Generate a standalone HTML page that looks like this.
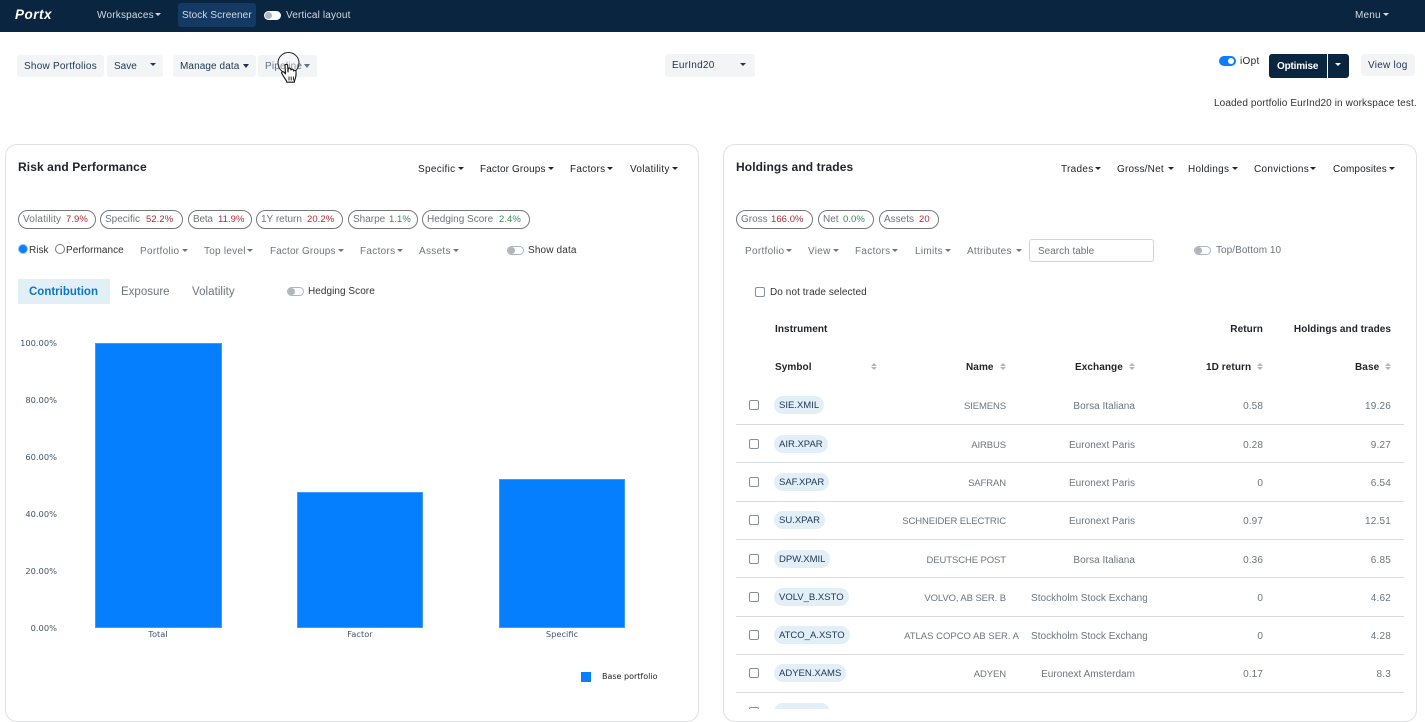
<!DOCTYPE html>
<html lang="en"><head><meta charset="utf-8"><title>Portx</title>
<style>
*{box-sizing:border-box}
html,body{margin:0;padding:0;width:1425px;height:722px;overflow:hidden;background:#fff}
body{position:relative;font-family:"Liberation Sans",sans-serif;font-size:10px;letter-spacing:.3px;color:#212529}
.t{position:absolute;white-space:nowrap;line-height:14px;margin-top:1px}
.a{position:absolute}
.nav{position:absolute;left:0;top:0;width:1425px;height:32px;background:#0a2540}
.w{color:#d5dae0}
.b{position:absolute;background:#f3f4f6;border-radius:3px}
.n{color:#1c3553}
.c{position:absolute;width:0;height:0;border-top:3px solid currentColor;border-left:3px solid transparent;border-right:3px solid transparent}
.card{position:absolute;top:144px;width:694px;height:578px;border:1px solid #dfe1e3;border-radius:12px;background:#fff}
.h{font-weight:700;font-size:12px;letter-spacing:.1px;color:#212529;margin-top:0}
.p{position:absolute;top:210px;height:19px;border:1px solid #777;border-radius:10px}
.g{color:#6c757d}
.pl{color:#6c757d;letter-spacing:0}
.red{color:#b02a37;font-size:9.5px;letter-spacing:.05px}
.grn{color:#2e8b57;font-size:9.5px;letter-spacing:.05px}
.tg{position:absolute;width:17px;height:9px;border:1px solid #adb5bd;border-radius:5px;background:#fff}
.tg i{position:absolute;left:0;top:0;width:7px;height:7px;border-radius:50%;background:#adb5bd}
.ax{font-family:"DejaVu Sans",sans-serif;font-size:8.3px;letter-spacing:0;color:#44546a}
.bar{position:absolute;background:#057ffe;border:1px solid #3e9bfb}
.th{font-weight:700;letter-spacing:.08px;color:#212529}
.s{position:absolute;width:6px;height:7px}
.s:before,.s:after{content:"";position:absolute;left:0;border-left:3px solid transparent;border-right:3px solid transparent}
.s:before{top:0;border-bottom:3px solid #adb5bd}
.s:after{bottom:0;border-top:3px solid #adb5bd}
.ck{position:absolute;width:10px;height:10px;border:1px solid #868e96;border-radius:2px;background:#fff}
.clip{position:absolute;left:0;top:0;width:1425px;height:709px;overflow:hidden}
.r{position:absolute;left:0;width:1425px;height:38.3px}
.r .l{position:absolute;left:736px;width:668px;top:38px;height:1px;background:#d8dadc}
.r .ck{left:749px;top:14.4px}
.r .y{position:absolute;left:774px;top:10.4px;height:18px;line-height:19.5px;padding:0 5px;border-radius:9px;background:#e3eff7;color:#1c3553;white-space:nowrap;letter-spacing:0;font-size:9.5px}
.r .t{top:13.4px;color:#6c757d}
.r .nm{right:419px;font-size:9.5px;letter-spacing:-.1px}
.r .ex{right:290px;letter-spacing:.03px}
.r .ex2{left:1031px;width:116px;overflow:hidden;letter-spacing:.03px}
.r .rt{right:162px;letter-spacing:.1px}
.r .bs{right:34px;letter-spacing:.2px}
</style></head><body>

<div class="nav"></div>
<div class="t" style="left:15px;top:7px;color:#fff;font-weight:700;font-style:italic;font-size:13.5px;letter-spacing:.5px">Portx</div>
<div class="t w" style="left:97px;top:8px;letter-spacing:.2px">Workspaces</div><div class="c w" style="left:155px;top:13px"></div>
<div class="a" style="left:178px;top:3px;width:78px;height:24px;background:#143a63;border-radius:3px"></div>
<div class="t" style="left:182px;top:8px;color:#d5dae0;letter-spacing:.1px">Stock Screener</div>
<div class="a" style="left:264px;top:11px;width:17px;height:9px;background:#fff;border-radius:5px"><i class="a" style="left:1px;top:1px;width:7px;height:7px;border-radius:50%;background:#adb5bd"></i></div>
<div class="t w" style="left:286px;top:8px;letter-spacing:.15px">Vertical layout</div>
<div class="t w" style="left:1355px;top:8px;letter-spacing:.2px">Menu</div><div class="c w" style="left:1383px;top:13px"></div>

<div class="b" style="left:17px;top:55px;width:87px;height:22px"></div>
<div class="t n" style="left:24px;top:59px;letter-spacing:.23px">Show Portfolios</div>
<div class="b" style="left:107px;top:55px;width:56px;height:22px"></div>
<div class="t n" style="left:114px;top:59px;letter-spacing:0">Save</div><div class="c n" style="left:150px;top:63px"></div>
<div class="b" style="left:173px;top:55px;width:83px;height:22px"></div>
<div class="t n" style="left:180px;top:59px;letter-spacing:.09px">Manage data</div><div class="c n" style="left:243px;top:64px;border-top-width:4px"></div>
<div class="b" style="left:258px;top:55px;width:59px;height:22px"></div>
<div class="t" style="left:265px;top:59px;color:#5f7389;letter-spacing:.2px">Pipeline</div><div class="c" style="left:304px;top:64px;color:#5f7389;border-top-width:4px"></div>

<div class="b" style="left:665px;top:54px;width:90px;height:23px"></div>
<div class="t n" style="left:672px;top:58px;letter-spacing:.24px">EurInd20</div><div class="c n" style="left:740px;top:63px"></div>

<div class="a" style="left:1219px;top:56px;width:17px;height:10px;border-radius:5px;background:#0d7ffb"><i class="a" style="left:9px;top:2px;width:6px;height:6px;border-radius:50%;background:#fff"></i></div>
<div class="t" style="left:1240px;top:54px">iOpt</div>
<div class="a" style="left:1269px;top:54px;width:80px;height:24px;background:#0a2540;border-radius:3px"></div>
<div class="a" style="left:1327px;top:54px;width:1px;height:24px;background:#fff"></div>
<div class="t" style="left:1277px;top:59px;color:#fff;font-weight:700;letter-spacing:-.2px">Optimise</div><div class="c" style="left:1335px;top:63px;color:#fff"></div>
<div class="b" style="left:1361px;top:54px;width:54px;height:22px"></div>
<div class="t n" style="left:1368px;top:58px;letter-spacing:.25px">View log</div>
<div class="t" style="left:1214px;top:96px;color:#333;letter-spacing:.11px">Loaded portfolio EurInd20 in workspace test.</div>

<!-- Left card -->
<div class="card" style="left:5px"></div>
<div class="t h" style="left:18px;top:160px">Risk and Performance</div>
<div class="t" style="left:418px;top:162px">Specific</div><div class="c" style="left:458px;top:167px"></div>
<div class="t" style="left:480px;top:162px;letter-spacing:.13px">Factor Groups</div><div class="c" style="left:548px;top:167px"></div>
<div class="t" style="left:570px;top:162px">Factors</div><div class="c" style="left:607px;top:167px"></div>
<div class="t" style="left:630px;top:162px">Volatility</div><div class="c" style="left:672px;top:167px"></div>

<div class="p" style="left:18px;width:78px"></div>
<div class="t pl" style="left:23px;top:212px;letter-spacing:.15px">Volatility</div><div class="t red" style="left:66px;top:212px">7.9%</div>
<div class="p" style="left:100px;width:83px"></div>
<div class="t pl" style="left:105px;top:212px">Specific</div><div class="t red" style="left:146px;top:212px">52.2%</div>
<div class="p" style="left:188px;width:64px"></div>
<div class="t pl" style="left:193px;top:212px;letter-spacing:-.2px">Beta</div><div class="t red" style="left:218px;top:212px">11.9%</div>
<div class="p" style="left:256px;width:87px"></div>
<div class="t pl" style="left:261px;top:212px">1Y return</div><div class="t red" style="left:307px;top:212px">20.2%</div>
<div class="p" style="left:348px;width:70px"></div>
<div class="t pl" style="left:353px;top:212px">Sharpe</div><div class="t grn" style="left:389px;top:212px">1.1%</div>
<div class="p" style="left:422px;width:108px"></div>
<div class="t pl" style="left:427px;top:212px">Hedging Score</div><div class="t grn" style="left:499px;top:212px">2.4%</div>

<div class="a" style="left:18px;top:244px;width:10px;height:10px;border-radius:50%;background:#0d7ffb;border:1px solid #8fc1fb"></div>
<div class="t" style="left:29px;top:243px;color:#333;letter-spacing:0">Risk</div>
<div class="a" style="left:55px;top:244px;width:10px;height:10px;border-radius:50%;border:1px solid #777;background:#fff"></div>
<div class="t" style="left:66px;top:243px;color:#333;letter-spacing:.05px">Performance</div>

<div class="t g" style="left:140px;top:244px">Portfolio</div><div class="c g" style="left:182px;top:249px"></div>
<div class="t g" style="left:204px;top:244px;letter-spacing:.25px">Top level</div><div class="c g" style="left:247px;top:249px"></div>
<div class="t g" style="left:270px;top:244px;letter-spacing:.13px">Factor Groups</div><div class="c g" style="left:338px;top:249px"></div>
<div class="t g" style="left:360px;top:244px">Factors</div><div class="c g" style="left:397px;top:249px"></div>
<div class="t g" style="left:419px;top:244px">Assets</div><div class="c g" style="left:453px;top:249px"></div>
<div class="tg" style="left:507px;top:246px"><i></i></div>
<div class="t" style="left:528px;top:243px;color:#333;letter-spacing:.15px">Show data</div>

<div class="a" style="left:18px;top:279px;width:92px;height:25px;background:#e3eff7"></div>
<div class="t" style="left:29px;top:284px;font-size:11.5px;font-weight:700;letter-spacing:0;color:#0a78c2">Contribution</div>
<div class="t g" style="left:121px;top:284px;font-size:11.5px;letter-spacing:0">Exposure</div>
<div class="t g" style="left:192px;top:284px;font-size:11.5px;letter-spacing:.05px">Volatility</div>
<div class="tg" style="left:287px;top:287px"><i></i></div>
<div class="t" style="left:308px;top:284px;color:#333;letter-spacing:.05px">Hedging Score</div>

<div class="t ax" style="right:1368px;top:335px">100.00%</div>
<div class="t ax" style="right:1368px;top:392px">80.00%</div>
<div class="t ax" style="right:1368px;top:449px">60.00%</div>
<div class="t ax" style="right:1368px;top:506px">40.00%</div>
<div class="t ax" style="right:1368px;top:563px">20.00%</div>
<div class="t ax" style="right:1368px;top:620px">0.00%</div>
<div class="bar" style="left:95px;top:343px;width:127px;height:285px"></div>
<div class="bar" style="left:297px;top:492px;width:126px;height:136px"></div>
<div class="bar" style="left:499px;top:479px;width:126px;height:149px"></div>
<div class="t ax" style="left:118px;width:80px;text-align:center;top:626px">Total</div>
<div class="t ax" style="left:320px;width:80px;text-align:center;top:626px">Factor</div>
<div class="t ax" style="left:522px;width:80px;text-align:center;top:626px">Specific</div>
<div class="a" style="left:581px;top:672px;width:10px;height:10px;background:#057ffe"></div>
<div class="t ax" style="left:602px;top:669px;color:#222;font-size:8px">Base portfolio</div>

<!-- Right card -->
<div class="card" style="left:723px"></div>
<div class="t h" style="left:736px;top:160px">Holdings and trades</div>
<div class="t" style="left:1061px;top:162px">Trades</div><div class="c" style="left:1095px;top:167px"></div>
<div class="t" style="left:1117px;top:162px;letter-spacing:.2px">Gross/Net</div><div class="c" style="left:1168px;top:167px"></div>
<div class="t" style="left:1188px;top:162px">Holdings</div><div class="c" style="left:1232px;top:167px"></div>
<div class="t" style="left:1254px;top:162px">Convictions</div><div class="c" style="left:1310px;top:167px"></div>
<div class="t" style="left:1333px;top:162px;letter-spacing:.1px">Composites</div><div class="c" style="left:1389px;top:167px"></div>

<div class="p" style="left:736px;width:77px"></div>
<div class="t pl" style="left:741px;top:212px">Gross</div><div class="t red" style="left:771px;top:212px">166.0%</div>
<div class="p" style="left:818px;width:56px"></div>
<div class="t pl" style="left:823px;top:212px">Net</div><div class="t grn" style="left:843px;top:212px">0.0%</div>
<div class="p" style="left:879px;width:60px"></div>
<div class="t pl" style="left:884px;top:212px">Assets</div><div class="t red" style="left:919px;top:212px">20</div>

<div class="t g" style="left:745px;top:244px">Portfolio</div><div class="c g" style="left:786px;top:249px"></div>
<div class="t g" style="left:808px;top:244px">View</div><div class="c g" style="left:833px;top:249px"></div>
<div class="t g" style="left:855px;top:244px">Factors</div><div class="c g" style="left:892px;top:249px"></div>
<div class="t g" style="left:915px;top:244px">Limits</div><div class="c g" style="left:945px;top:249px"></div>
<div class="t g" style="left:967px;top:244px;letter-spacing:.25px">Attributes</div><div class="c g" style="left:1016px;top:249px"></div>
<div class="a" style="left:1029px;top:239px;width:125px;height:23px;border:1px solid #ced4da;border-radius:3px;background:#fff"></div>
<div class="t g" style="left:1038px;top:244px;letter-spacing:0">Search table</div>
<div class="tg" style="left:1194px;top:246px"><i></i></div>
<div class="t g" style="left:1216px;top:243px;letter-spacing:.05px">Top/Bottom 10</div>

<div class="ck" style="left:755px;top:287px"></div>
<div class="t" style="left:770px;top:285px;color:#333;letter-spacing:.08px">Do not trade selected</div>

<div class="t th" style="left:775px;top:322px">Instrument</div>
<div class="t th" style="right:162px;top:322px">Return</div>
<div class="t th" style="right:34px;top:322px;letter-spacing:.05px">Holdings and trades</div>
<div class="t th" style="left:775px;top:360px">Symbol</div><div class="s" style="left:871px;top:363px"></div>
<div class="t th" style="left:966px;top:360px">Name</div><div class="s" style="left:1000px;top:363px"></div>
<div class="t th" style="left:1075px;top:360px">Exchange</div><div class="s" style="left:1129px;top:363px"></div>
<div class="t th" style="left:1206px;top:360px">1D return</div><div class="s" style="left:1257px;top:363px"></div>
<div class="t th" style="left:1355px;top:360px">Base</div><div class="s" style="left:1385px;top:363px"></div>

<div class="clip">
<div class="r" style="top:386px"><div class="ck"></div><div class="y">SIE.XMIL</div><div class="t nm">SIEMENS</div><div class="t ex">Borsa Italiana</div><div class="t rt">0.58</div><div class="t bs">19.26</div><div class="l"></div></div>
<div class="r" style="top:424.3px"><div class="ck"></div><div class="y">AIR.XPAR</div><div class="t nm">AIRBUS</div><div class="t ex">Euronext Paris</div><div class="t rt">0.28</div><div class="t bs">9.27</div><div class="l"></div></div>
<div class="r" style="top:462.6px"><div class="ck"></div><div class="y">SAF.XPAR</div><div class="t nm">SAFRAN</div><div class="t ex">Euronext Paris</div><div class="t rt">0</div><div class="t bs">6.54</div><div class="l"></div></div>
<div class="r" style="top:500.9px"><div class="ck"></div><div class="y">SU.XPAR</div><div class="t nm">SCHNEIDER ELECTRIC</div><div class="t ex">Euronext Paris</div><div class="t rt">0.97</div><div class="t bs">12.51</div><div class="l"></div></div>
<div class="r" style="top:539.2px"><div class="ck"></div><div class="y">DPW.XMIL</div><div class="t nm">DEUTSCHE POST</div><div class="t ex">Borsa Italiana</div><div class="t rt">0.36</div><div class="t bs">6.85</div><div class="l"></div></div>
<div class="r" style="top:577.5px"><div class="ck"></div><div class="y">VOLV_B.XSTO</div><div class="t nm">VOLVO, AB SER. B</div><div class="t ex2">Stockholm Stock Exchange</div><div class="t rt">0</div><div class="t bs">4.62</div><div class="l"></div></div>
<div class="r" style="top:615.8px"><div class="ck"></div><div class="y">ATCO_A.XSTO</div><div class="t" style="right:406px;font-size:9.5px;letter-spacing:0">ATLAS COPCO AB SER. A</div><div class="t ex2">Stockholm Stock Exchange</div><div class="t rt">0</div><div class="t bs">4.28</div><div class="l"></div></div>
<div class="r" style="top:654.1px"><div class="ck"></div><div class="y">ADYEN.XAMS</div><div class="t nm">ADYEN</div><div class="t ex">Euronext Amsterdam</div><div class="t rt">0.17</div><div class="t bs">8.3</div><div class="l"></div></div>
<div class="r" style="top:692.4px"><div class="ck"></div><div class="y" style="width:56px">&nbsp;</div></div>
</div>

<!-- cursor -->
<svg class="a" style="left:275px;top:50px" width="30" height="36" viewBox="0 0 30 36">
<circle cx="13.5" cy="13" r="10.5" fill="rgba(255,255,255,.25)" stroke="#222" stroke-width="1"/>
<path d="M10 15.500c0-1.600 2.600-1.600 2.700 0l.3 6.500 .2-3c.3-1.300 2.300-1.200 2.500 0l.2 1c.3-1.200 2.300-1.100 2.500 .1l.2 .9c.4-1 2.300-.8 2.400 .5 .2 2.600 0 5.500-1.200 8.500-.3 .8-.4 1.500-.4 2.200h-7.500c-.2-1.400-1-2.300-2-3.600l-3-5c-.8-1.500 1-2.600 2.300-1.300l1.300 1.600z" fill="#fff" stroke="#111" stroke-width="1.100" stroke-linejoin="round"/>
<path d="M14 26.500v4M16.200 26.500v4M18.400 26.500v4" stroke="#111" stroke-width=".9"/>
</svg>
</body></html>
